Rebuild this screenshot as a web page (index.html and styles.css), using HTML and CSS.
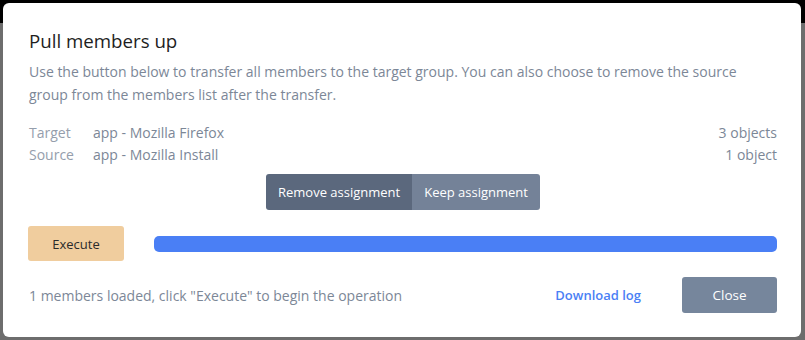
FILE: index.html
```html
<!DOCTYPE html>
<html lang="en">
<head>
    <meta charset="UTF-8">
    <title>Pull members up</title>
    <link rel="stylesheet" href="styles.css">
</head>
<body>

    <div class="modal">
        <h2 class="title">Pull members up</h2>
        <p class="desc">Use the button below to transfer all members to the target group. You can also choose to remove the source group from the members list after the transfer.</p>

        <div class="info">
            <div class="info-row">
                <span class="label">Target</span>
                <span class="value">app - Mozilla Firefox</span>
                <span class="count">3 objects</span>
            </div>
            <div class="info-row">
                <span class="label">Source</span>
                <span class="value">app - Mozilla Install</span>
                <span class="count">1 object</span>
            </div>
        </div>

        <div class="toggle">
            <button class="toggle-btn active">Remove assignment</button>
            <button class="toggle-btn">Keep assignment</button>
        </div>

        <div class="run">
            <button class="execute">Execute</button>
            <div class="progress"><div class="progress-fill" style="width: 100%"></div></div>
        </div>

        <div class="footer">
            <span class="status">1 members loaded, click "Execute" to begin the operation</span>
            <a class="download" href="#">Download log</a>
            <button class="close">Close</button>
        </div>
    </div>

</body>
</html>
```

FILE: styles.css
```css
html, body {
    height: 100%;
}
body {
    margin: 0;
    padding: 3px 4px 3px 3px;
    box-sizing: border-box;
    font-family: 'Open Sans', 'Noto Sans', sans-serif;
    background: linear-gradient(#000 0, #000 23px, #6d6d6d 23px);
}
.modal {
    background: #fff;
    border-radius: 6px;
    height: 334px;
    box-sizing: border-box;
    padding: 25px 24px 24px 25px;
    display: flex;
    flex-direction: column;
}
.title {
    margin: 0 0 0 1px;
    font-size: 18.7px;
    line-height: 25px;
    font-weight: 500;
    color: #1e1e1e;
}
.desc {
    margin: 7px 0 0 1px;
    font-size: 14px;
    line-height: 23px;
    color: #7c8797;
}
.info {
    margin-top: 16px;
    margin-left: 1px;
    font-size: 14px;
    line-height: 22px;
    color: #7c8797;
}
.info-row {
    display: flex;
}
.label {
    width: 64px;
    color: #959eac;
}
.value {
    flex: 1;
}
.toggle {
    display: flex;
    justify-content: center;
    margin-top: 8px;
    padding-left: 1px;
}
.toggle-btn {
    border: none;
    height: 36px;
    padding: 0 12px;
    font-family: inherit;
    font-size: 13px;
    color: #fff;
    background: #748298;
}
.toggle-btn:first-child {
    border-radius: 3px 0 0 3px;
}
.toggle-btn:last-child {
    border-radius: 0 3px 3px 0;
}
.toggle-btn.active {
    background: #5b687d;
}
.run {
    display: flex;
    align-items: center;
    gap: 30px;
    margin-top: 16px;
}
.execute {
    width: 96px;
    height: 35px;
    border: none;
    border-radius: 3px;
    background: #f0cd9e;
    color: #2b2b2b;
    font-family: inherit;
    font-size: 13px;
}
.progress {
    flex: 1;
    height: 16px;
    border-radius: 5px;
    background: #e6e9ee;
    overflow: hidden;
}
.progress-fill {
    height: 100%;
    background: #4a7ff5;
}
.footer {
    display: flex;
    align-items: center;
    margin-top: 16px;
}
.status {
    flex: 1;
    margin-left: 1px;
    font-size: 14px;
    color: #7c8797;
}
.download {
    font-size: 13px;
    font-weight: 600;
    color: #4a7ff5;
    text-decoration: none;
    margin-right: 41px;
}
.close {
    width: 95px;
    height: 36px;
    border: none;
    border-radius: 3px;
    background: #76869c;
    color: #fff;
    font-family: inherit;
    font-size: 13.5px;
}
```
